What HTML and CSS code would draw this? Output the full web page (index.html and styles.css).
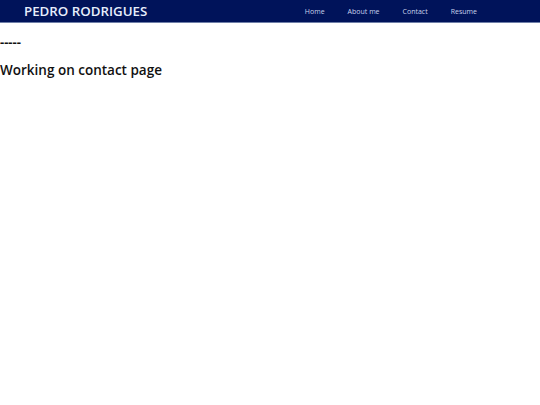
FILE: index.html
```html
<!DOCTYPE html>
<html>
<head>
<meta charset="utf-8">
<link rel="stylesheet" href="styles.css">
</head>
<body>
<header class="navbar">
  <div class="brand">PEDRO RODRIGUES</div>
  <nav class="links">
    <a href="#">Home</a>
    <a href="#">About me</a>
    <a href="#">Contact</a>
    <a href="#">Resume</a>
  </nav>
</header>
<main class="content">
  <p class="dashes">-----</p>
  <h2 class="title">Working on contact page</h2>
</main>
</body>
</html>
```
FILE: styles.css
```css
html, body {
  margin: 0;
  padding: 0;
  background: #ffffff;
  font-family: "Open Sans", "Noto Sans", sans-serif;
}
.navbar {
  height: 22px;
  background: #00135a;
  border-bottom: 1px solid #6f7fa8;
  display: flex;
  align-items: center;
  justify-content: space-between;
  padding: 0 63px 0 24px;
}
.brand {
  color: #e6eefc;
  font-size: 13.3px;
  font-weight: 600;
}
.links {
  display: flex;
  gap: 23px;
  margin-left: 2px;
}
.links a {
  color: #c8d2ec;
  font-size: 7px;
  text-decoration: none;
}
.dashes {
  margin: 9px 0 0 0;
  font-size: 13px;
  font-weight: 700;
  color: #111;
  line-height: 20px;
}
.title {
  margin: 8px 0 0 0;
  font-size: 13.5px;
  font-weight: 600;
  color: #111;
  line-height: 20px;
}
```
